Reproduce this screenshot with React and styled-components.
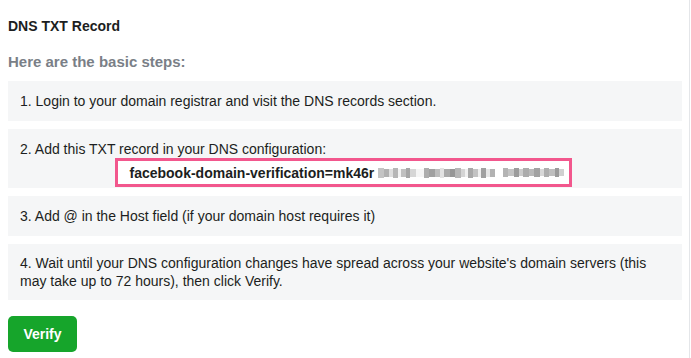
import React from "react";
import styled, { createGlobalStyle } from "styled-components";

const Global = createGlobalStyle`
  html, body { margin: 0; padding: 0; background: #ffffff; }
  body { font-family: "Liberation Sans", Arial, Helvetica, sans-serif; color: #1c1e21; }
`;

const Page = styled.div`
  width: 674px;
  min-height: 358px;
  box-sizing: content-box;
  padding: 17px 7px 0 8px;
  border-right: 1px solid #e4e6e9;
`;

const Title = styled.div`
  font-size: 14px;
  line-height: 18px;
  font-weight: bold;
  color: #1c1e21;
`;

const Subtitle = styled.div`
  margin-top: 18px;
  font-size: 15px;
  line-height: 18px;
  font-weight: bold;
  color: #7a7f87;
`;

const Steps = styled.div`
  margin-top: 10px;
  display: flex;
  flex-direction: column;
  gap: 8px;
`;

const Step = styled.div`
  background: #f5f6f7;
  padding: ${(p) => p.$pad || "11px 12px"};
  font-size: 14px;
  line-height: 18px;
  color: #1c1e21;
`;

const CodeRow = styled.div`
  display: flex;
  justify-content: center;
  padding-right: 4px;
`;

const Code = styled.div`
  display: flex;
  align-items: center;
  width: 457px;
  height: 29px;
  box-sizing: border-box;
  border: 3px solid #f2578d;
  background: #ffffff;
  padding-left: 12px;
  font-size: 14px;
  font-weight: bold;
  color: #1c1e21;
  white-space: nowrap;
  overflow: hidden;
`;

const Blur = styled.span`
  display: inline-flex;
  align-items: center;
  margin-left: ${(p) => p.$ml || 0}px;
  height: 10px;
`;

const Px = styled.span`
  display: inline-block;
  width: ${(p) => p.$w}px;
  height: ${(p) => p.$h || 8}px;
  background: ${(p) => p.$c};
`;

const VerifyButton = styled.button`
  margin-top: 16px;
  width: 69px;
  height: 36px;
  border: none;
  border-radius: 5px;
  background: #16a52b;
  color: #ffffff;
  font-family: "Liberation Sans", Arial, sans-serif;
  font-size: 14px;
  font-weight: bold;
  padding: 0;
  cursor: pointer;
`;

const blurA = [
  [6, "#c4c4c4"], [5, "#b1b1b1"], [4, "#dedede"], [5, "#b6b6b6"], [3, "#f2f2f2"],
  [5, "#c0c0c0"], [4, "#a6a6a6"], [6, "#d6d6d6"], [8, "#f5f5f5"], [5, "#adadad"],
  [6, "#a0a0a0"], [5, "#bdbdbd"], [4, "#e2e2e2"], [6, "#aaaaaa"], [5, "#969696"],
  [6, "#b6b6b6"], [4, "#d4d4d4"], [3, "#f0f0f0"], [5, "#a8a8a8"], [5, "#c2c2c2"],
  [3, "#eeeeee"], [5, "#a0a0a0"], [4, "#e6e6e6"], [5, "#b2b2b2"],
];
const blurB = [
  [5, "#b4b4b4"], [6, "#c4c4c4"], [5, "#9c9c9c"], [4, "#cccccc"], [6, "#acacac"],
  [5, "#b9b9b9"], [6, "#a2a2a2"], [4, "#d8d8d8"], [5, "#aeaeae"], [6, "#bebebe"],
  [4, "#9a9a9a"], [5, "#d0d0d0"],
];

export default function App() {
  return (
    <>
      <Global />
      <Page>
        <Title>DNS TXT Record</Title>
        <Subtitle>Here are the basic steps:</Subtitle>
        <Steps>
          <Step>1. Login to your domain registrar and visit the DNS records section.</Step>
          <Step $pad="11px 12px 1px">
            2. Add this TXT record in your DNS configuration:
            <CodeRow>
              <Code>
                facebook-domain-verification=mk46r
                <Blur $ml={4}>
                  {blurA.map(([w, c], i) => (
                    <Px key={i} $w={w} $c={c} $h={i % 3 === 0 ? 10 : 8} />
                  ))}
                </Blur>
                <Blur $ml={8}>
                  {blurB.map(([w, c], i) => (
                    <Px key={i} $w={w} $c={c} $h={i % 2 === 0 ? 9 : 7} />
                  ))}
                </Blur>
              </Code>
            </CodeRow>
          </Step>
          <Step>3. Add @ in the Host field (if your domain host requires it)</Step>
          <Step $pad="10px 12px">
            4. Wait until your DNS configuration changes have spread across your website's domain servers (this may take up to 72 hours), then click Verify.
          </Step>
        </Steps>
        <VerifyButton>Verify</VerifyButton>
      </Page>
    </>
  );
}
